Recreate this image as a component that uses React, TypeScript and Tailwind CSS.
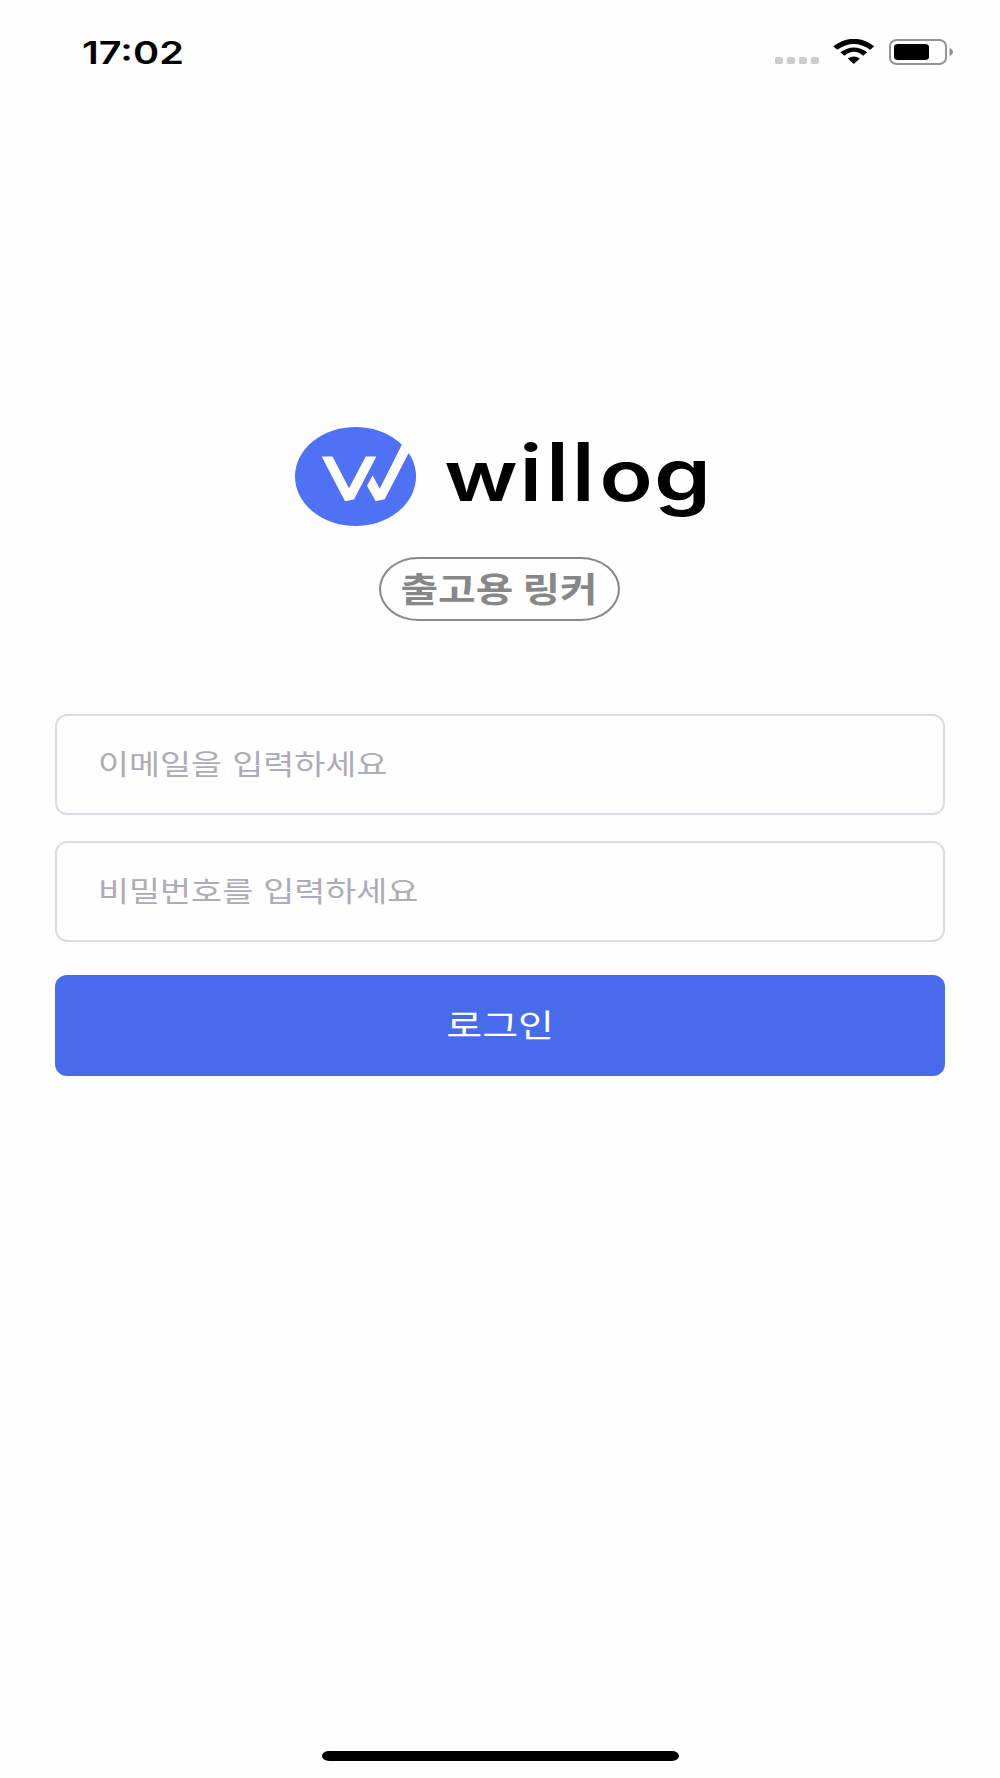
import React, { useState } from "react";

function StatusBar() {
  return (
    <header className="flex h-[104px] items-start justify-between pl-[82px] pr-[46px] pt-[35px]">
      <span className="origin-left scale-x-[1.28] font-['Inter',sans-serif] text-[31px] leading-[36px] font-semibold text-black">
        17:02
      </span>
      <div className="flex pt-1">
        <div className="mt-[18px] mr-[14px] flex gap-1">
          <span className="h-[7px] w-2 rounded-[2px] bg-[#cbcbcb]" />
          <span className="h-[7px] w-2 rounded-[2px] bg-[#cbcbcb]" />
          <span className="h-[7px] w-2 rounded-[2px] bg-[#cbcbcb]" />
          <span className="h-[7px] w-2 rounded-[2px] bg-[#cbcbcb]" />
        </div>
        <svg width="42" height="26" viewBox="0 0 42 26">
          <path d="M0.3 7.2Q21 -7.6 41.3 7.2L37.2 10.8Q21 -0.6 4.2 10.8Z" />
          <path d="M7.4 13.2Q21 3.8 34.2 13.2L30.2 16.8Q21 8.8 11.4 16.8Z" />
          <path d="M14.8 19.5Q21 15.6 26.8 19.5L20.8 25Z" />
        </svg>
        <div className="ml-[14px] h-[26px] w-[58px] rounded-[8px/7px] border-2 border-[#929292] p-[3px]">
          <div className="h-4 w-[35px] rounded-[4px/3px] bg-black" />
        </div>
        <svg className="mt-[9px] ml-[2px]" width="5" height="8" viewBox="0 0 5 8">
          <path d="M0.5 0Q4 1.5 4 4Q4 6.5 0.5 8Z" fill="#929292" />
        </svg>
      </div>
    </header>
  );
}

function Logo() {
  return (
    <svg width="420" height="110" viewBox="295 420 420 110" className="ml-[295px]">
      <ellipse cx="355.5" cy="476.5" rx="60.5" ry="49.5" fill="#4f71f6" />
      <g fill="#fefefe">
        <path d="M321.7 456.5H332.5L349 488.3L365.7 456.5H376.3L354 499.5L345 501.3Z" />
        <path d="M372.7 475.5L379.7 488.7L407 434.5L417 437L384.7 499.3L375.7 501.3L367 485.7Z" />
      </g>
      <text
        transform="translate(445 501) scale(1.25 1)"
        x="-0.6 58.9 79.8 100.5 123.6 167.2"
        y="0"
        className="font-['Inter',sans-serif] text-[70px] font-semibold"
      >
        w<tspan className="text-[78px] font-medium">i</tspan>
        <tspan className="text-[81px] font-medium">ll</tspan>o<tspan className="text-[73px]">g</tspan>
      </text>
    </svg>
  );
}

type FieldProps = {
  type: string;
  placeholder: string;
  value: string;
  onChange: (value: string) => void;
};

function Field({ type, placeholder, value, onChange }: FieldProps) {
  return (
    <div className="h-[101px] overflow-hidden rounded-[12px] border-2 border-[#dcdce3] pl-[41px]">
      <input
        type={type}
        placeholder={placeholder}
        value={value}
        onChange={(e) => onChange(e.target.value)}
        className="h-full w-[690px] origin-left scale-x-[1.205] bg-transparent pb-[3px] text-[28px] text-black outline-none [word-spacing:2px] placeholder:text-[#adacb6]"
      />
    </div>
  );
}

export default function App() {
  const [email, setEmail] = useState("");
  const [password, setPassword] = useState("");

  return (
    <div className="flex h-[1778px] w-[1000px] flex-col bg-[#fefefe] font-['Noto_Sans_CJK_KR',sans-serif]">
      <StatusBar />
      <main className="flex flex-1 flex-col pt-[316px]">
        <Logo />
        <div className="mt-[27px] ml-[379px] flex h-[64px] w-[241px] items-center justify-center rounded-[39px/32px] border-2 border-[#878787] pb-[2px]">
          <span className="scale-x-[1.2] text-[34px] leading-none font-bold whitespace-nowrap text-[#878787]">
            출고용 링커
          </span>
        </div>
        <form className="mt-[93px] flex flex-col px-[55px]" onSubmit={(e) => e.preventDefault()}>
          <div className="flex flex-col gap-[26px]">
            <Field type="email" placeholder="이메일을 입력하세요" value={email} onChange={setEmail} />
            <Field type="password" placeholder="비밀번호를 입력하세요" value={password} onChange={setPassword} />
          </div>
          <button className="mt-[33px] flex h-[101px] items-center justify-center rounded-[12px] bg-[#476beb] pb-[5px] text-white">
            <span className="scale-x-[1.22] text-[32px] leading-none">로그인</span>
          </button>
        </form>
      </main>
      <div className="mb-[17px] ml-[322px] h-[10px] w-[357px] rounded-[7px/5px] bg-black" />
    </div>
  );
}
